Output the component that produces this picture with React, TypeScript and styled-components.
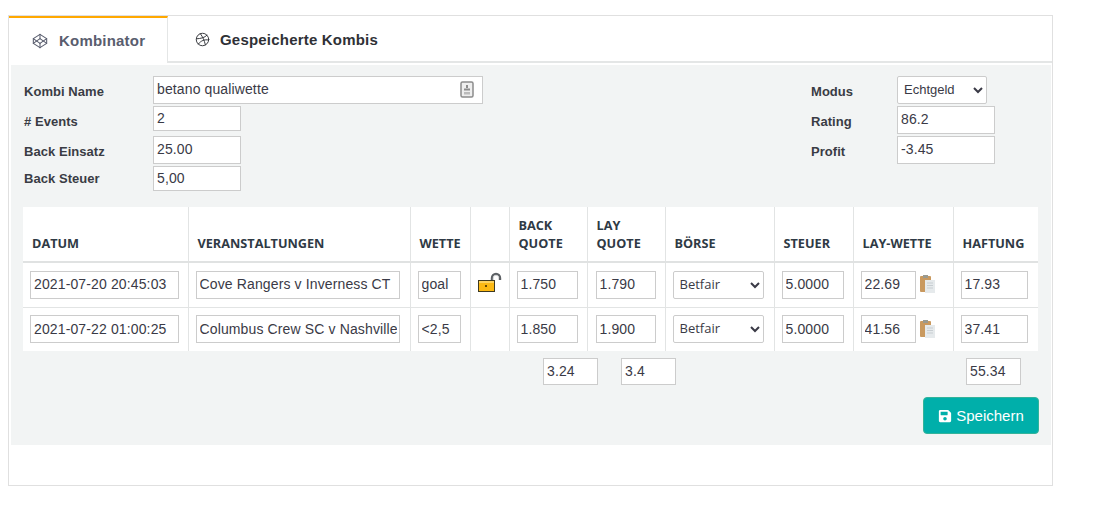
import React from 'react';
import styled, { createGlobalStyle } from 'styled-components';
import { Codepen, Dribbble } from 'lucide-react';
import { FaSave } from 'react-icons/fa';

const GlobalStyle = createGlobalStyle`
  html, body {
    margin: 0;
    background: #fff;
    font-family: "Liberation Sans", Arial, sans-serif;
  }
`;

const Card = styled.div`
  box-sizing: border-box;
  width: 1045px;
  height: 471px;
  margin: 15px 0 0 8px;
  border: 1px solid #e0e0e0;
`;

const TabBar = styled.div`
  display: flex;
  height: 47px;
  box-sizing: border-box;
  border-bottom: 2px solid #e4e6e6;
`;

const Tab = styled.div<{ $active?: boolean }>`
  display: flex;
  align-items: center;
  gap: ${p => (p.$active ? '11px' : '10px')};
  box-sizing: border-box;
  height: ${p => (p.$active ? '47px' : '45px')};
  width: ${p => (p.$active ? '159px' : 'auto')};
  padding-left: ${p => (p.$active ? '23px' : '27px')};
  padding-top: ${p => (p.$active ? '0' : '2px')};
  border-top: ${p => (p.$active ? '2px solid #ffa800' : 'none')};
  border-right: ${p => (p.$active ? '1px solid #e4e6e6' : 'none')};
  background: #fff;
  color: ${p => (p.$active ? '#595d6e' : '#2f3136')};
  font-size: 15px;
  font-weight: 700;
  letter-spacing: 0.2px;
`;

const Panel = styled.div`
  margin: 2px 1px 0 2px;
  height: 380px;
  box-sizing: border-box;
  padding: 11px 12px 0 12px;
  background: #f2f4f4;
`;

const FormArea = styled.div`
  display: flex;
  justify-content: space-between;
`;

const FormGrid = styled.div<{ $label: number }>`
  display: grid;
  grid-template-columns: ${p => p.$label}px auto;
  align-items: center;
  justify-items: start;
`;

const FieldLabel = styled.label`
  font-size: 13px;
  font-weight: 700;
  color: #3a3c44;
  letter-spacing: 0.05px;
`;

const Field = styled.input<{ $w: number; $h?: number; $mb?: number }>`
  box-sizing: border-box;
  width: ${p => p.$w}px;
  height: ${p => p.$h ?? 28}px;
  margin-bottom: ${p => p.$mb ?? 2}px;
  padding: 0 3px 2px;
  border: 1px solid #ccc;
  background: #fff;
  color: #3a3a46;
  font-family: inherit;
  font-size: 14px;
  letter-spacing: 0.12px;
  outline: none;
`;

const NameWrap = styled.div`
  position: relative;
  height: 30px;
`;

const NameIcon = styled.svg`
  position: absolute;
  left: 307px;
  top: 5px;
`;

const LeftForm = styled.div`
  padding-left: 1px;
`;

const RightForm = styled.div`
  margin-right: 44px;
`;

const Select = styled.select<{ $w: number; $mb?: number }>`
  box-sizing: border-box;
  width: ${p => p.$w}px;
  height: 28px;
  margin-bottom: ${p => p.$mb ?? 0}px;
  padding: 0 2px 2px;
  border: 1px solid #ccc;
  border-radius: 2px;
  background: #fff;
  color: #3a3a46;
  font-family: inherit;
  font-size: 13px;
  outline: none;
`;

const Table = styled.table`
  width: 1015px;
  margin: 16px 0 0 0;
  table-layout: fixed;
  border-collapse: collapse;
  background: #fff;
  font-family: "Open Sans", sans-serif;
`;

const Th = styled.th<{ $w: number }>`
  width: ${p => p.$w}px;
  box-sizing: border-box;
  height: 55px;
  padding: 0 0 9px 9px;
  border-right: 1px solid #e2e4e4;
  border-bottom: 2px solid #e0e2e2;
  vertical-align: bottom;
  text-align: left;
  font-size: 12.7px;
  line-height: 18px;
  font-weight: 700;
  color: #2f3a45;
  text-transform: uppercase;
  &:last-child {
    border-right: none;
  }
`;

const Td = styled.td`
  height: 45px;
  box-sizing: border-box;
  padding: 0 0 0 7px;
  border-right: 1px solid #e2e4e4;
  border-bottom: 1px solid #e2e4e4;
  vertical-align: middle;
  &:last-child {
    border-right: none;
  }
  tr:last-child & {
    height: 44px;
    border-bottom: none;
  }
`;

const CellInput = styled.input<{ $w: number; $ml?: number }>`
  display: block;
  box-sizing: border-box;
  width: ${p => p.$w}px;
  height: 28px;
  margin-left: ${p => p.$ml ?? 0}px;
  padding: 0 2px 1px 3px;
  border: 1px solid #ccc;
  background: #fff;
  color: #3a3a46;
  font-family: "Liberation Sans", Arial, sans-serif;
  font-size: 14px;
  letter-spacing: 0.13px;
  outline: none;
`;

const CellRow = styled.div`
  display: flex;
  align-items: center;
  gap: 4px;
`;

const Totals = styled.div`
  display: flex;
  margin: 7px 0 0 520px;
`;

const TotalInput = styled(CellInput)`
  height: 27px;
`;

const Actions = styled.div`
  display: flex;
  justify-content: flex-end;
  margin-top: 12px;
`;

const SaveButton = styled.button`
  display: flex;
  align-items: center;
  justify-content: center;
  gap: 4px;
  box-sizing: border-box;
  width: 116px;
  height: 37px;
  border: 1px solid #33b39a;
  border-radius: 4px;
  background: #00afaa;
  color: #fff;
  font-family: inherit;
  font-size: 15px;
`;

const LockSvg = styled.svg`
  display: block;
  margin-top: -6px;
`;

const LockIcon = () => (
  <LockSvg width="24" height="20" viewBox="0 0 24 20">
    <path d="M14 9V6a4 4 0 0 1 8 0V8" fill="none" stroke="#5c6064" strokeWidth="2.4" />
    <path d="M15.2 8V6a2.8 2.8 0 0 1 5.6 0" fill="none" stroke="#d8dadc" strokeWidth="0.8" />
    <rect x="0.5" y="8.5" width="16" height="11" fill="#fcb913" stroke="#3f3a20" />
    <rect x="1" y="9" width="15" height="2" fill="#fdd25e" />
    <rect x="7" y="13" width="2" height="2" fill="#6a4a00" />
  </LockSvg>
);

const ClipboardIcon = () => (
  <svg width="16" height="19" viewBox="0 0 16 19">
    <rect x="0" y="1" width="11" height="16" rx="1" fill="#c9995f" />
    <rect x="3" y="0" width="5" height="3" fill="#9a9a90" />
    <rect x="5" y="5" width="10" height="13" fill="#e6eaec" />
    <path d="M7 8h6M7 10.5h6M7 13h6" stroke="#c8ced2" strokeWidth="1" />
  </svg>
);

const rows = [
  { datum: '2021-07-20 20:45:03', name: 'Cove Rangers v Inverness CT', wette: 'goal', lock: true, back: '1.750', lay: '1.790', layWette: '22.69', haftung: '17.93' },
  { datum: '2021-07-22 01:00:25', name: 'Columbus Crew SC v Nashville', wette: '<2,5', lock: false, back: '1.850', lay: '1.900', layWette: '41.56', haftung: '37.41' },
];

const columns: [string, number][] = [
  ['Datum', 165],
  ['Veranstaltungen', 222],
  ['Wette', 60],
  ['', 39],
  ['Back Quote', 78],
  ['Lay Quote', 78],
  ['Börse', 109],
  ['Steuer', 79],
  ['Lay-Wette', 100],
  ['Haftung', 85],
];

export default function App() {
  return (
    <>
      <GlobalStyle />
      <Card>
        <TabBar>
          <Tab $active>
            <Codepen size={16} strokeWidth={1.6} />
            Kombinator
          </Tab>
          <Tab>
            <Dribbble size={15} strokeWidth={1.5} />
            Gespeicherte Kombis
          </Tab>
        </TabBar>
        <Panel>
          <FormArea>
            <LeftForm>
              <FormGrid $label={129}>
                <FieldLabel>Kombi Name</FieldLabel>
                <NameWrap>
                  <Field $w={330} defaultValue="betano qualiwette" />
                  <NameIcon width="14" height="17" viewBox="0 0 14 17">
                    <rect x="1" y="1" width="12" height="15" rx="1.5" fill="#eee" stroke="#8c8c8c" strokeWidth="1.5" />
                    <rect x="6" y="4" width="2" height="3" fill="#8c8c8c" />
                    <rect x="4" y="7.5" width="6" height="2" fill="#8c8c8c" />
                    <rect x="4" y="11" width="6" height="2.5" fill="#bbb" />
                  </NameIcon>
                </NameWrap>
                <FieldLabel># Events</FieldLabel>
                <Field $w={88} $h={25} $mb={5} defaultValue="2" />
                <FieldLabel>Back Einsatz</FieldLabel>
                <Field $w={88} defaultValue="25.00" />
                <FieldLabel>Back Steuer</FieldLabel>
                <Field $w={88} $h={25} $mb={0} defaultValue="5,00" />
              </FormGrid>
            </LeftForm>
            <RightForm>
              <FormGrid $label={86}>
                <FieldLabel>Modus</FieldLabel>
                <Select $w={90} $mb={2} defaultValue="Echtgeld">
                  <option>Echtgeld</option>
                </Select>
                <FieldLabel>Rating</FieldLabel>
                <Field $w={98} defaultValue="86.2" />
                <FieldLabel>Profit</FieldLabel>
                <Field $w={98} defaultValue="-3.45" />
              </FormGrid>
            </RightForm>
          </FormArea>

          <Table>
            <thead>
              <tr>
                {columns.map(([label, w]) => (
                  <Th key={label + w} $w={w}>{label}</Th>
                ))}
              </tr>
            </thead>
            <tbody>
              {rows.map(r => (
                <tr key={r.datum}>
                  <Td><CellInput $w={149} defaultValue={r.datum} /></Td>
                  <Td><CellInput $w={204} defaultValue={r.name} /></Td>
                  <Td><CellInput $w={43} defaultValue={r.wette} /></Td>
                  <Td>{r.lock && <LockIcon />}</Td>
                  <Td><CellInput $w={61} defaultValue={r.back} /></Td>
                  <Td><CellInput $w={60} $ml={1} defaultValue={r.lay} /></Td>
                  <Td>
                    <Select $w={91} defaultValue="Betfair">
                      <option>Betfair</option>
                    </Select>
                  </Td>
                  <Td><CellInput $w={62} defaultValue="5.0000" /></Td>
                  <Td>
                    <CellRow>
                      <CellInput $w={55} defaultValue={r.layWette} />
                      <ClipboardIcon />
                    </CellRow>
                  </Td>
                  <Td><CellInput $w={67} defaultValue={r.haftung} /></Td>
                </tr>
              ))}
            </tbody>
          </Table>

          <Totals>
            <TotalInput $w={55} defaultValue="3.24" />
            <TotalInput $w={55} $ml={23} defaultValue="3.4" />
            <TotalInput $w={55} $ml={290} defaultValue="55.34" />
          </Totals>

          <Actions>
            <SaveButton>
              <FaSave size={14} />
              Speichern
            </SaveButton>
          </Actions>
        </Panel>
      </Card>
    </>
  );
}
